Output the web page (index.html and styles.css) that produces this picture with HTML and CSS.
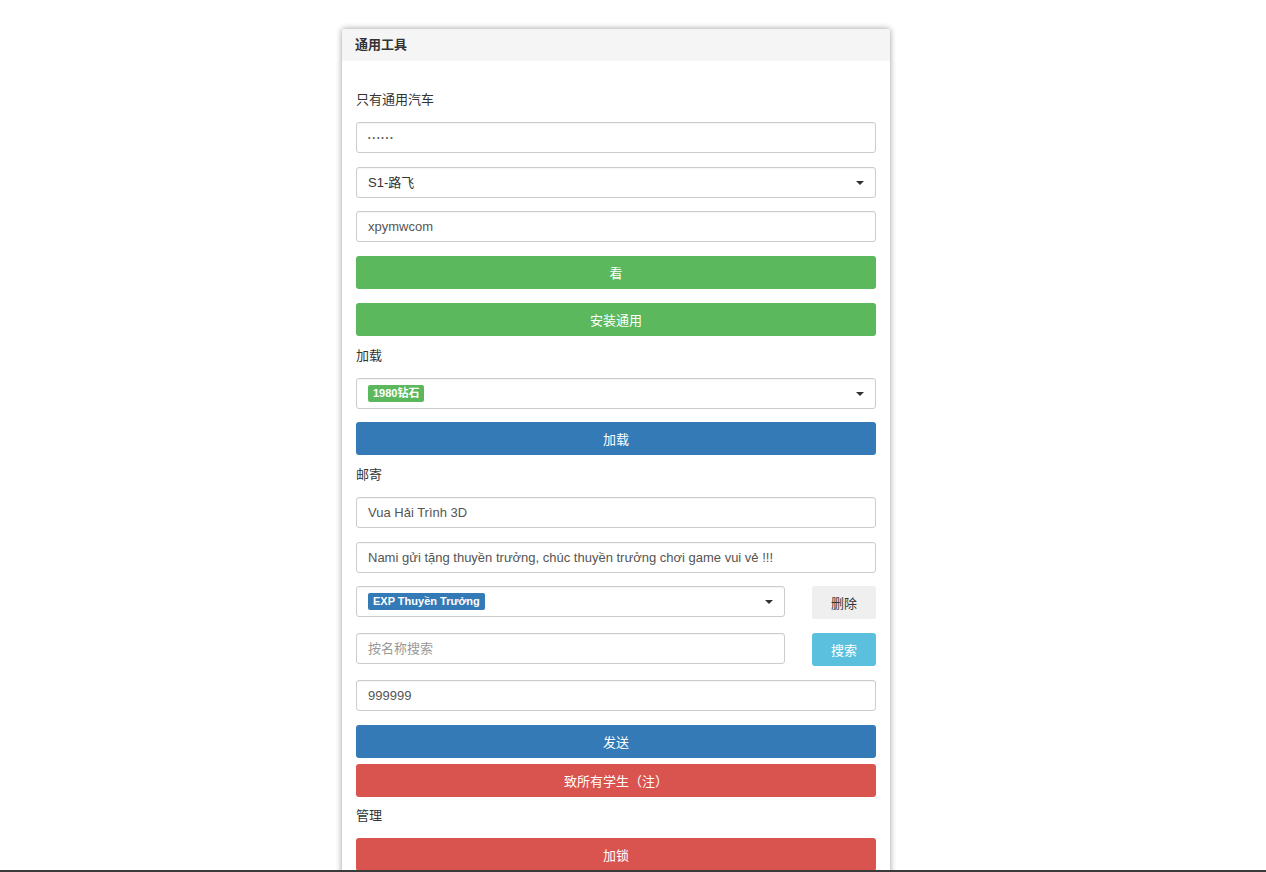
FILE: index.html
```html
<!DOCTYPE html>
<html lang="zh-CN">
<head>
    <meta charset="UTF-8">
    <meta name="viewport" content="width=device-width, initial-scale=1.0">
    <title>通用工具</title>
    <link rel="stylesheet" href="styles.css">
</head>
<body>
    <div class="panel">
        <div class="panel-heading">通用工具</div>
        <div class="panel-body">
            <label class="section-label">只有通用汽车</label>
            <input class="form-control pwd" type="password" value="123456">
            <div class="select-wrap">
                <select class="form-control">
                    <option>S1-路飞</option>
                </select>
            </div>
            <input class="form-control" type="text" value="xpymwcom">
            <button class="btn btn-success">看</button>
            <button class="btn btn-success">安装通用</button>

            <label class="section-label">加载</label>
            <div class="select-wrap">
                <div class="form-control tags"><span class="tag tag-green">1980钻石</span></div>
            </div>
            <button class="btn btn-primary">加载</button>

            <label class="section-label">邮寄</label>
            <input class="form-control" type="text" value="Vua Hải Trình 3D">
            <input class="form-control" type="text" value="Nami gửi tặng thuyền trưởng, chúc thuyền trưởng chơi game vui vẻ !!!">
            <div class="row">
                <div class="select-wrap grow">
                    <div class="form-control tags"><span class="tag tag-blue">EXP Thuyền Trưởng</span></div>
                </div>
                <button class="btn btn-default side">删除</button>
            </div>
            <div class="row">
                <input class="form-control grow" type="text" placeholder="按名称搜索">
                <button class="btn btn-info side">搜索</button>
            </div>
            <input class="form-control" type="text" value="999999">
            <button class="btn btn-primary">发送</button>
            <button class="btn btn-danger tight">致所有学生（注）</button>

            <label class="section-label">管理</label>
            <button class="btn btn-danger">加锁</button>
        </div>
    </div>
    <div class="bottom-line"></div>
</body>
</html>
```

FILE: styles.css
```css
body {
    margin: 0;
    padding: 29px 0 0 342px;
    font-family: 'Liberation Sans', 'Noto Sans CJK SC', sans-serif;
    font-size: 13px;
    color: #333;
    background-color: #fff;
}

.panel {
    width: 548px;
    background-color: #fff;
    border-radius: 3px;
    box-shadow: 0 0 6px rgba(0, 0, 0, 0.4);
}

.panel-heading {
    height: 32px;
    line-height: 32px;
    padding: 0 13px;
    background-color: #f5f5f5;
    border-radius: 3px 3px 0 0;
    font-weight: bold;
    color: #333;
}

.panel-body {
    display: flex;
    flex-direction: column;
    padding: 33px 14px 0 14px;
}

.section-label {
    display: block;
    line-height: 18px;
    margin: -3px 0 13px;
}

.form-control {
    box-sizing: border-box;
    width: 100%;
    height: 31px;
    margin: 0 0 13.5px;
    padding: 0 11px;
    border: 1px solid #ccc;
    border-radius: 3px;
    background-color: #fff;
    font-family: inherit;
    font-size: 13px;
    color: #555;
    outline: none;
    box-shadow: inset 0 1px 1px rgba(0, 0, 0, 0.04);
}

.form-control::placeholder {
    color: #999;
}

.pwd {
    font-size: 7px;
    letter-spacing: 2px;
}

select.form-control {
    appearance: none;
    -webkit-appearance: none;
    color: #333;
}

.select-wrap {
    position: relative;
}

/* small caret on the right of every select */
.select-wrap::after {
    content: '';
    position: absolute;
    right: 12px;
    top: 14px;
    border-left: 4px solid transparent;
    border-right: 4px solid transparent;
    border-top: 4px solid #333;
}

.tags {
    display: flex;
    align-items: center;
    padding: 0 11px;
}

.tag {
    display: inline-block;
    padding: 0 5px;
    line-height: 17px;
    border-radius: 2px;
    color: #fff;
    font-size: 11px;
    font-weight: bold;
}

.tag-green {
    background-color: #5cb85c;
}

.tag-blue {
    background-color: #337ab7;
}

.btn {
    display: block;
    width: 100%;
    height: 33px;
    margin: 0 0 14px;
    padding: 0;
    border: none;
    border-radius: 3px;
    font-family: inherit;
    font-size: 13px;
    color: #fff;
    cursor: pointer;
}

.btn-success {
    background-color: #5cb85c;
}

.btn-primary {
    background-color: #337ab7;
}

.btn-danger {
    background-color: #d9534f;
}

.btn-info {
    background-color: #5bc0de;
}

.btn-default {
    background-color: #efefef;
    color: #333;
}

.row {
    display: flex;
    align-items: flex-start;
    gap: 27px;
}

.grow {
    flex: 1;
}

.side {
    width: 64px;
    flex: none;
}

/* the red button sits close under the send button */
.btn.tight {
    margin-top: -8px;
    margin-bottom: 13px;
}

.bottom-line {
    position: fixed;
    left: 0;
    right: 0;
    bottom: 0;
    height: 2px;
    background-color: #3a3a3a;
}
```
